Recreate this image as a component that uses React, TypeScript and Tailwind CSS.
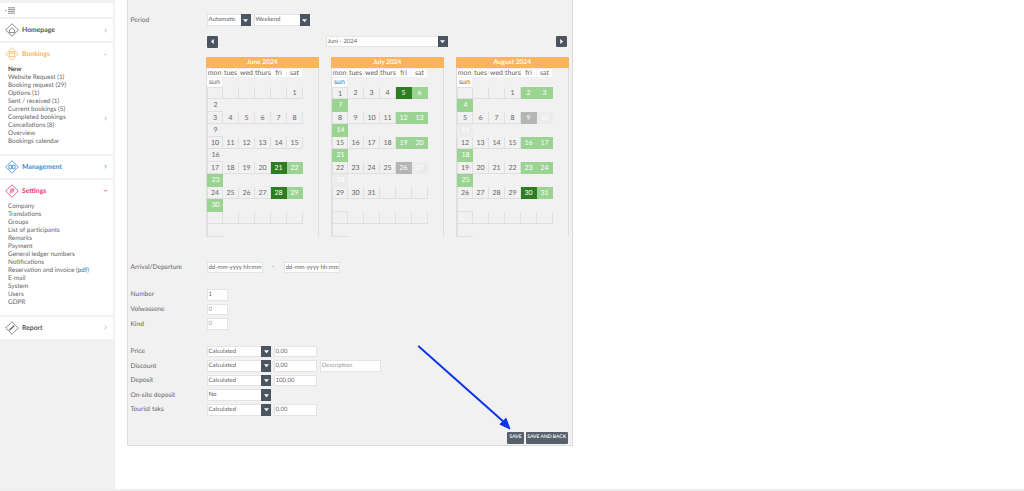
import React from 'react';

const font = "font-['Lato','Noto_Sans',sans-serif] antialiased [text-rendering:geometricPrecision]";

type CellKind = 'plain' | 'dark' | 'green' | 'grey' | 'faded';
type Cell = { d?: number; k?: CellKind };

const head = ['mon', 'tues', 'wed', 'thurs', 'fri', 'sat', 'sun'];

const p = (d: number, k: CellKind = 'plain'): Cell => ({ d, k });
const e: Cell = {};

const june: Cell[] = [
  e, e, e, e, e, p(1), p(2),
  p(3), p(4), p(5), p(6), p(7), p(8), p(9),
  p(10), p(11), p(12), p(13), p(14), p(15), p(16),
  p(17), p(18), p(19), p(20), p(21, 'dark'), p(22, 'green'), p(23, 'green'),
  p(24), p(25), p(26), p(27), p(28, 'dark'), p(29, 'green'), p(30, 'green'),
  e, e, e, e, e, e, e,
];

const july: Cell[] = [
  p(1), p(2), p(3), p(4), p(5, 'dark'), p(6, 'green'), p(7, 'green'),
  p(8), p(9), p(10), p(11), p(12, 'green'), p(13, 'green'), p(14, 'green'),
  p(15), p(16), p(17), p(18), p(19, 'green'), p(20, 'green'), p(21, 'green'),
  p(22), p(23), p(24), p(25), p(26, 'grey'), p(27, 'faded'), p(28, 'faded'),
  p(29), p(30), p(31), e, e, e, e,
  e, e, e, e, e, e, e,
];

const august: Cell[] = [
  e, e, e, p(1), p(2, 'green'), p(3, 'green'), p(4, 'green'),
  p(5), p(6), p(7), p(8), p(9, 'grey'), p(10, 'faded'), p(11, 'faded'),
  p(12), p(13), p(14), p(15), p(16, 'green'), p(17, 'green'), p(18, 'green'),
  p(19), p(20), p(21), p(22), p(23, 'green'), p(24, 'green'), p(25, 'green'),
  p(26), p(27), p(28), p(29), p(30, 'dark'), p(31, 'green'), e,
  e, e, e, e, e, e, e,
];

const cellClass: Record<CellKind, string> = {
  plain: 'text-[#666] border-[#e0e0e0]',
  dark: 'bg-[#2f7d22] text-white border-[#2f7d22]',
  green: 'bg-[#9bd392] text-white border-[#9bd392]',
  grey: 'bg-[#b5b5b5] text-white border-[#b5b5b5]',
  faded: 'bg-[#ececec] text-white border-[#ececec]',
};

const Caret = ({ dir = 'down' }: { dir?: 'down' | 'left' | 'right' }) => (
  <svg width="5" height="5" viewBox="0 0 6 6" fill="#fff">
    {dir === 'down' && <path d="M0 1.5h6L3 5z" />}
    {dir === 'left' && <path d="M4.5 0v6L1 3z" />}
    {dir === 'right' && <path d="M1.5 0v6L5 3z" />}
  </svg>
);

const Select = ({ text, w }: { text: string; w: string }) => (
  <div className={`flex h-[11.5px] ${w} bg-white border border-[#e4e4e4] items-stretch`}>
    <span className="flex-1 pl-[1px] text-[6px] leading-[9.5px] text-[#666] whitespace-nowrap overflow-hidden">{text}</span>
    <span className="w-[10px] -my-px -mr-px bg-[#4a5561] flex items-center justify-center">
      <Caret />
    </span>
  </div>
);

const Input = ({ text, w, muted }: { text: string; w: string; muted?: boolean }) => (
  <div className={`h-[11.5px] ${w} bg-white border border-[#e4e4e4] pl-[1px] text-[6px] leading-[9.5px] whitespace-nowrap overflow-hidden ${muted ? 'text-[#999]' : 'text-[#666]'}`}>
    {text}
  </div>
);

const Month = ({ title, cells }: { title: string; cells: Cell[] }) => (
  <div className="w-[112.5px] h-[180px] border-x border-[#dedede]">
    <div className="h-[11px] -mx-px bg-[#f8b55d] rounded-t-[1px] text-center text-[6.6px] leading-[11px] text-white font-semibold">
      {title}
    </div>
    <div className="grid grid-cols-[repeat(6,16px)] auto-rows-[9.2px] pt-[0.7px]">
      {head.map((h) => (
        <div key={h} className="h-[8.4px] mr-[1px] bg-white text-center text-[7px] leading-[9px] text-[#666]">
          {h}
        </div>
      ))}
    </div>
    <div className="grid grid-cols-[repeat(6,16px)] auto-rows-[12.5px] -mt-[0.7px]">
      {cells.map((c, i) => {
        const pos = i % 7;
        const wrapped = pos === 6;
        const first = pos === 0;
        return (
          <React.Fragment key={i}>
            <div
              className={`text-center text-[7px] leading-[13px] border-b ${wrapped ? '' : 'border-r'} ${first || wrapped ? 'border-l' : ''} ${i === 0 ? 'border-t' : ''} ${cellClass[c.k ?? 'plain']}`}
            >
              {c.d}
            </div>
            {wrapped && <div className="col-span-5" />}
          </React.Fragment>
        );
      })}
    </div>
  </div>
);

const Diamond = ({ color, children }: { color: string; children?: React.ReactNode }) => (
  <svg width="14" height="14" viewBox="0 0 16 16" fill="none" stroke={color} strokeWidth="0.9">
    <path d="M8 .8 15.2 8 8 15.2 .8 8z" />
    {children}
  </svg>
);

const Chevron = ({ open, color }: { open?: boolean; color: string }) => (
  <svg width="5" height="5" viewBox="0 0 6 6" fill="none" stroke={color} strokeWidth="0.9">
    {open ? <path d="M1 2l2 2 2-2" /> : <path d="M2 1l2 2-2 2" />}
  </svg>
);

const MenuCard = ({
  icon,
  label,
  color,
  open,
  chevron,
  items,
}: {
  icon: React.ReactNode;
  label: string;
  color: string;
  open?: boolean;
  chevron: string;
  items?: { t: string; bold?: boolean; arrow?: boolean }[];
}) => (
  <div className="bg-white mb-[2px]">
    <div className="h-[22px] flex items-center pl-[4.5px] pr-[5px]">
      {icon}
      <span className="ml-[3.5px] mt-[1px] text-[6.8px] font-bold" style={{ color }}>
        {label}
      </span>
      <span className="ml-auto">
        <Chevron open={open} color={chevron} />
      </span>
    </div>
    {items && (
      <div className="pl-[8px] pr-[5px] pt-[0.8px] pb-[7.6px]">
        {items.map((it) => (
          <div key={it.t} className={`h-[8.05px] flex items-center justify-between text-[6.4px] leading-[8px] whitespace-nowrap ${it.bold ? 'font-bold text-[#444]' : 'text-[#666]'}`}>
            {it.t}
            {it.arrow && <Chevron color="#999" />}
          </div>
        ))}
      </div>
    )}
  </div>
);

const Row = ({ label, children, h = 'h-[14.65px]' }: { label: string; children: React.ReactNode; h?: string }) => (
  <div className={`flex items-center ${h}`}>
    <span className="w-[76px] mt-[1px] text-[6.6px] text-[#666]">{label}</span>
    <div className="flex gap-[2.6px]">{children}</div>
  </div>
);

export default function App() {
  return (
    <div className={`${font} relative h-[491px] w-[1024px] overflow-hidden bg-white flex`}>
      <aside className="w-[115px] h-[489px] bg-[#f1f1f1] shrink-0 pt-[3px]">
        <div className="w-[113px]">
          <div className="h-[14px] bg-white mb-[2px] flex items-center pl-[5px]">
            <svg width="11" height="7" viewBox="0 0 11 7" stroke="#777" strokeWidth="0.8" fill="none">
              <path d="M3 .8h7M3 2.6h7M3 4.400h7M3 6.200h7M0 3.500h1.500" />
            </svg>
          </div>
          <MenuCard
            label="Homepage"
            color="#555"
            chevron="#999"
            icon={
              <Diamond color="#666">
                <path d="M5 8l3-2.600L11 8v3H5z" />
              </Diamond>
            }
          />
          <MenuCard
            label="Bookings"
            color="#f8b55d"
            chevron="#f8b55d"
            open
            icon={
              <Diamond color="#f8b55d">
                <path d="M4.800 5.400h6.400v5.400H4.800zM4.800 7h6.400" />
              </Diamond>
            }
            items={[
              { t: 'New', bold: true },
              { t: 'Website Request (1)' },
              { t: 'Booking request (29)' },
              { t: 'Options (1)' },
              { t: 'Sent / received (1)' },
              { t: 'Current bookings (5)' },
              { t: 'Completed bookings', arrow: true },
              { t: 'Cancellations (8)' },
              { t: 'Overview' },
              { t: 'Bookings calendar' },
            ]}
          />
          <MenuCard
            label="Management"
            color="#3b8ed0"
            chevron="#3b8ed0"
            icon={
              <Diamond color="#3b8ed0">
                <path d="M4.500 6h3v4h-3zM8.500 6h3v4h-3z" />
              </Diamond>
            }
          />
          <MenuCard
            label="Settings"
            color="#e8386e"
            chevron="#e8386e"
            open
            icon={
              <Diamond color="#e8386e">
                <path d="M6 10.500l1-5M8 10.500V5.500l2 .2v2.200H8" />
              </Diamond>
            }
            items={[
              { t: 'Company' },
              { t: 'Translations' },
              { t: 'Groups' },
              { t: 'List of participants' },
              { t: 'Remarks' },
              { t: 'Payment' },
              { t: 'General ledger numbers' },
              { t: 'Notifications' },
              { t: 'Reservation and invoice (pdf)' },
              { t: 'E-mail' },
              { t: 'System' },
              { t: 'Users' },
              { t: 'GDPR' },
            ]}
          />
          <MenuCard
            label="Report"
            color="#555"
            chevron="#999"
            icon={
              <Diamond color="#666">
                <path d="M5 10.500 10.500 5.500" strokeWidth="1.600" />
              </Diamond>
            }
          />
        </div>
      </aside>

      <main className="ml-[12px] w-[445.5px] h-[447px] -mt-px bg-[#f1f1f1] border-x border-b border-[#dcdcdc] flex flex-col">
        <div className="pl-[2.5px] pt-[14.500px]">
          <div className="flex items-center h-[13px]">
            <span className="w-[76px] mt-[1px] text-[6.6px] text-[#666]">Period</span>
            <div className="flex gap-[3px]">
              <Select text="Automatic" w="w-[44px]" />
              <Select text="Weekend" w="w-[56px]" />
            </div>
          </div>

          <div className="flex items-center h-[12px] mt-[9px] ml-[76px] w-[360.5px] justify-between">
            <span className="w-[11px] h-[12px] rounded-[1px] bg-[#4a5561] flex items-center justify-center">
              <Caret dir="left" />
            </span>
            <Select text="Juni - 2024" w="w-[122px]" />
            <span className="w-[11.5px] h-[11px] rounded-[1px] bg-[#4a5561] flex items-center justify-center">
              <Caret dir="right" />
            </span>
          </div>

          <div className="flex gap-[12.5px] mt-[9.8px] ml-[75.5px]">
            <Month title="June 2024" cells={june} />
            <Month title="July 2024" cells={july} />
            <Month title="August 2024" cells={august} />
          </div>

          <div className="mt-[24.7px]">
            <Row label="Arrival/Departure" h="h-[11px]">
              <Input text="dd-mm-yyyy hh:mm" w="w-[56px]" />
              <span className="w-[16px] text-center text-[6px] text-[#666]">-</span>
              <Input text="dd-mm-yyyy hh:mm" w="w-[56px]" />
            </Row>
          </div>

          <div className="mt-[14.6px]">
            <Row label="Number"><Input text="1" w="w-[21.5px]" /></Row>
            <Row label="Volwassene"><Input text="0" w="w-[21.5px]" muted /></Row>
            <Row label="Kind"><Input text="0" w="w-[21.5px]" muted /></Row>
          </div>

          <div className="mt-[12.5px]">
            <Row label="Price">
              <Select text="Calculated" w="w-[64.5px]" />
              <Input text="0,00" w="w-[43.5px]" />
            </Row>
            <Row label="Discount">
              <Select text="Calculated" w="w-[64.5px]" />
              <Input text="0,00" w="w-[43.5px]" />
              <Input text="Description" w="w-[61px]" muted />
            </Row>
            <Row label="Deposit">
              <Select text="Calculated" w="w-[64.5px]" />
              <Input text="100,00" w="w-[43.5px]" />
            </Row>
            <Row label="On-site deposit">
              <Select text="No" w="w-[64.5px]" />
            </Row>
            <Row label="Tourist taks">
              <Select text="Calculated" w="w-[64.5px]" />
              <Input text="0,00" w="w-[43.5px]" />
            </Row>
          </div>
        </div>

        <div className="mt-auto mb-[1.3px] mr-[4px] flex justify-end gap-[1.7px]">
          <span className="h-[11.4px] w-[17px] rounded-[1px] bg-[#56616c] text-white text-[5px] font-semibold leading-[11.4px] text-center">SAVE</span>
          <span className="h-[11.4px] w-[41.7px] rounded-[1px] bg-[#56616c] text-white text-[5px] font-semibold leading-[11.4px] text-center whitespace-nowrap">SAVE AND BACK</span>
        </div>
      </main>

      <svg className="absolute left-[415px] top-[343px]" width="100" height="90" viewBox="0 0 100 90" fill="none">
        <path d="M3.300 3 90 80" stroke="#0b35e6" strokeWidth="2" />
        <path d="M95 86 85 81.300 91 75.300z" fill="#0b35e6" stroke="#0b35e6" strokeWidth="1" />
      </svg>

      <div className="absolute left-0 right-0 bottom-0 h-[2px] bg-[#eeeeee]" />
    </div>
  );
}
